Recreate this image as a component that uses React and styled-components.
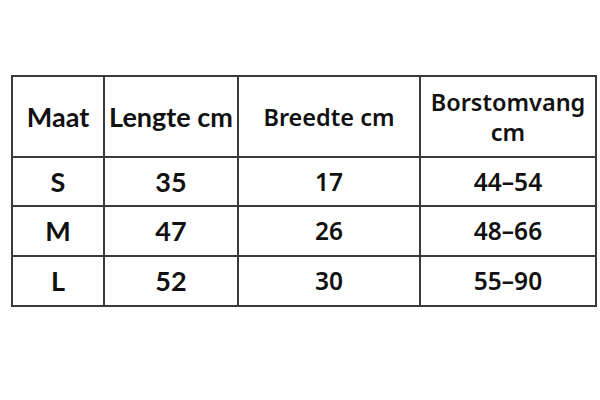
import React from "react";
import styled, { createGlobalStyle } from "styled-components";

const GlobalStyle = createGlobalStyle`
  body {
    margin: 0;
    background: #ffffff;
  }
`;

const Page = styled.div`
  width: 600px;
  height: 400px;
  padding: 75px 0 0 11px;
  box-sizing: border-box;
  background: #ffffff;
`;

const SizeTable = styled.table`
  border-collapse: collapse;
  table-layout: fixed;
  width: 584px;
  color: #111111;
`;

const Cell = styled.td`
  border: 2px solid #3a3a3a;
  padding: 0;
  text-align: center;
  vertical-align: middle;
  font-family: ${(p) => (p.$alt ? '"Noto Sans", sans-serif' : 'Lato, sans-serif')};
  font-weight: ${(p) => (p.$alt ? 600 : 700)};
  font-size: ${(p) => (p.$alt ? "24.5px" : "27px")};
  line-height: 28px;
  height: ${(p) => p.$h}px;
  white-space: nowrap;
`;

const HeadCell = styled(Cell).attrs({ as: "th" })`
  font-size: ${(p) => (p.$alt ? "23.5px" : "27px")};
  line-height: 30px;
`;

const columns = [
  { width: 92, alt: false },
  { width: 134, alt: false },
  { width: 182, alt: true },
  { width: 176, alt: true },
];

const headers = ["Maat", "Lengte cm", "Breedte cm", "Borstomvang cm"];

const rows = [
  { h: 47, values: ["S", "35", "17", "44–54"] },
  { h: 48, values: ["M", "47", "26", "48–66"] },
  { h: 48, values: ["L", "52", "30", "55–90"] },
];

const App = () => {
  return (
    <>
      <GlobalStyle />
      <Page>
        <SizeTable>
          <colgroup>
            {columns.map((c, i) => (
              <col key={i} style={{ width: c.width }} />
            ))}
          </colgroup>
          <thead>
            <tr>
              {headers.map((h, i) => (
                <HeadCell key={h} $alt={columns[i].alt} $h={79}>
                  {i === 3 ? (
                    <>
                      Borstomvang
                      <br />
                      cm
                    </>
                  ) : (
                    h
                  )}
                </HeadCell>
              ))}
            </tr>
          </thead>
          <tbody>
            {rows.map((r) => (
              <tr key={r.values[0]}>
                {r.values.map((v, i) => (
                  <Cell key={i} $alt={columns[i].alt} $h={r.h}>
                    {v}
                  </Cell>
                ))}
              </tr>
            ))}
          </tbody>
        </SizeTable>
      </Page>
    </>
  );
};

export default App;
